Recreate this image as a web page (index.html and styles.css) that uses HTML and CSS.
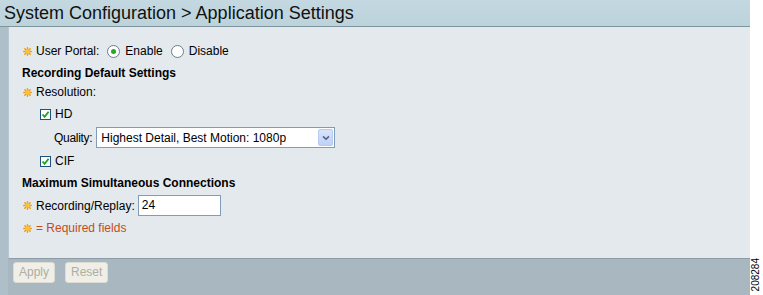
FILE: index.html
```html
<!DOCTYPE html>
<html>
<head>
<meta charset="utf-8">
<link rel="stylesheet" href="styles.css">
</head>
<body>
<div class="page">
  <div class="shot">
    <div class="header"><h1 class="title">System Configuration &gt; Application Settings</h1></div>
    <div class="body">
      <div class="panel">
        <div class="row r-portal">
          <svg class="star" viewBox="0 0 10 10"><g stroke="#f39a12" stroke-width="1.6" stroke-linecap="round"><line x1="5" y1="0.8" x2="5" y2="9.2"/><line x1="0.8" y1="5" x2="9.2" y2="5"/><line x1="2" y1="2" x2="8" y2="8"/><line x1="8" y1="2" x2="2" y2="8"/></g><circle cx="5" cy="5" r="2.4" fill="#fbc531"/></svg>
          <span class="lbl">User Portal:</span>
          <span class="radio on"></span><span class="opt">Enable</span>
          <span class="radio"></span><span class="opt">Disable</span>
        </div>
        <div class="row heading r-rds">Recording Default Settings</div>
        <div class="row r-res">
          <svg class="star" viewBox="0 0 10 10"><g stroke="#f39a12" stroke-width="1.6" stroke-linecap="round"><line x1="5" y1="0.8" x2="5" y2="9.2"/><line x1="0.8" y1="5" x2="9.2" y2="5"/><line x1="2" y1="2" x2="8" y2="8"/><line x1="8" y1="2" x2="2" y2="8"/></g><circle cx="5" cy="5" r="2.4" fill="#fbc531"/></svg>
          <span class="lbl">Resolution:</span>
        </div>
        <div class="row indent r-hd">
          <span class="check"><svg viewBox="0 0 9 9"><path d="M1.5 4.5 L3.6 6.8 L7.6 1.8" fill="none" stroke="#21a121" stroke-width="1.8"/></svg></span><span class="opt">HD</span>
        </div>
        <div class="row indent2 r-q">
          <span class="lbl q-lbl">Quality:</span>
          <span class="select"><span class="sel-text">Highest Detail, Best Motion: 1080p</span><span class="sel-btn"><svg viewBox="0 0 9 6"><path d="M1.2 1.2 L4.5 4.4 L7.8 1.2" fill="none" stroke="#4d6185" stroke-width="1.7"/></svg></span></span>
        </div>
        <div class="row indent r-cif">
          <span class="check"><svg viewBox="0 0 9 9"><path d="M1.5 4.5 L3.6 6.8 L7.6 1.8" fill="none" stroke="#21a121" stroke-width="1.8"/></svg></span><span class="opt">CIF</span>
        </div>
        <div class="row heading r-msc">Maximum Simultaneous Connections</div>
        <div class="row r-rr">
          <svg class="star" viewBox="0 0 10 10"><g stroke="#f39a12" stroke-width="1.6" stroke-linecap="round"><line x1="5" y1="0.8" x2="5" y2="9.2"/><line x1="0.8" y1="5" x2="9.2" y2="5"/><line x1="2" y1="2" x2="8" y2="8"/><line x1="8" y1="2" x2="2" y2="8"/></g><circle cx="5" cy="5" r="2.4" fill="#fbc531"/></svg>
          <span class="lbl">Recording/Replay:</span>
          <span class="input">24</span>
        </div>
        <div class="row req r-req">
          <svg class="star" viewBox="0 0 10 10"><g stroke="#f39a12" stroke-width="1.6" stroke-linecap="round"><line x1="5" y1="0.8" x2="5" y2="9.2"/><line x1="0.8" y1="5" x2="9.2" y2="5"/><line x1="2" y1="2" x2="8" y2="8"/><line x1="8" y1="2" x2="2" y2="8"/></g><circle cx="5" cy="5" r="2.4" fill="#fbc531"/></svg>
          <span>= Required fields</span>
        </div>
      </div>
      <div class="buttons">
        <span class="btn btn-apply">Apply</span>
        <span class="btn btn-reset">Reset</span>
      </div>
    </div>
  </div>
  <div class="side"><span class="fig">208284</span></div>
</div>
</body>
</html>
```
FILE: styles.css
```css
html, body {
  margin: 0;
  padding: 0;
  background: #ffffff;
}
body {
  font-family: "Liberation Sans", Arial, sans-serif;
  color: #000;
}
.page {
  display: flex;
  width: 763px;
  height: 295px;
}
.shot {
  width: 750px;
  height: 295px;
  display: flex;
  flex-direction: column;
  background: #a9b7c1;
}
.header {
  background: linear-gradient(180deg, #c3d8e0 0%, #bdd3db 100%);
  border-bottom: 1px solid #7f959e;
  box-sizing: border-box;
  height: 27px;
}
.title {
  margin: 0;
  padding: 4px 0 0 4px;
  font-size: 18px;
  font-weight: normal;
  line-height: 19px;
  color: #111;
}
.body {
  flex: 1;
  background: linear-gradient(90deg, #aebfc9 0, #aebfc9 8px, transparent 8px);
  display: flex;
  flex-direction: column;
}
.panel {
  margin-left: 8px;
  height: 232px;
  background: #e3e9ed;
  border-bottom: 1px solid #8c9ca6;
  border-left: 1px solid #b9c8d0;
  box-sizing: border-box;
  padding: 16px 0 0 13px;
  font-size: 12px;
}
.row {
  display: flex;
  align-items: center;
  height: 16px;
}
.star {
  width: 9px;
  height: 9px;
  margin: 0 4px 0 1px;
}
.lbl { margin-right: 6px; }
.radio {
  width: 13px;
  height: 13px;
  border: 1px solid #6b7d8a;
  border-radius: 50%;
  background: #fff;
  box-sizing: border-box;
  margin: 0 5px 0 2px;
  position: relative;
}
.radio.on::after {
  content: "";
  position: absolute;
  left: 3px;
  top: 3px;
  width: 5px;
  height: 5px;
  border-radius: 50%;
  background: #2aa52a;
}
.opt { margin-right: 6px; }
.heading { font-weight: bold; }
.r-rds { margin-top: 6px; }
.r-res { margin-top: 3px; }
.indent { padding-left: 18px; }
.r-hd { margin-top: 6px; }
.indent2 { padding-left: 32px; }
.r-q { margin-top: 5px; height: 21px; }
.q-lbl { margin-right: 4px; letter-spacing: -0.3px; }
.check {
  width: 11px;
  height: 11px;
  border: 1px solid #1c5180;
  background: #fff;
  box-sizing: border-box;
  margin-right: 4px;
  display: flex;
}
.check svg { width: 9px; height: 9px; }
.select {
  width: 239px;
  height: 21px;
  background: #fff;
  border: 1px solid #7f9db9;
  box-sizing: border-box;
  display: flex;
  align-items: center;
}
.sel-text {
  flex: 1;
  padding-left: 4px;
  font-size: 12px;
}
.sel-btn {
  width: 15px;
  height: 17px;
  margin-right: 1px;
  border: 1px solid #b8cbef;
  border-radius: 2px;
  box-sizing: border-box;
  background: linear-gradient(180deg, #d9e4fc 0%, #bfd1f7 100%);
  display: flex;
  align-items: center;
  justify-content: center;
}
.sel-btn svg { width: 8px; height: 6px; }
.r-cif { margin-top: 5px; }
.r-msc { margin-top: 6px; }
.r-rr { margin-top: 4px; height: 21px; }
.input {
  width: 83px;
  height: 21px;
  border: 1px solid #7f9db9;
  background: #fff;
  box-sizing: border-box;
  padding: 2px 0 0 3px;
  font-size: 12px;
  margin-left: -3px;
}
.req {
  color: #c8491c;
  margin-top: 4px;
}
.buttons {
  display: flex;
  gap: 10px;
  padding: 3px 0 0 13px;
}
.btn {
  height: 19px;
  padding: 0 5px;
  background: #efefe7;
  border: 1px solid #dcdcd2;
  border-radius: 3px;
  color: #aeaea2;
  font-size: 12px;
  line-height: 19px;
}
.side {
  width: 13px;
  position: relative;
}
.fig {
  position: absolute;
  left: 0;
  bottom: 4px;
  writing-mode: vertical-rl;
  transform: rotate(180deg);
  font-size: 10px;
  font-family: "Liberation Sans", Arial, sans-serif;
  line-height: 12px;
}
```
